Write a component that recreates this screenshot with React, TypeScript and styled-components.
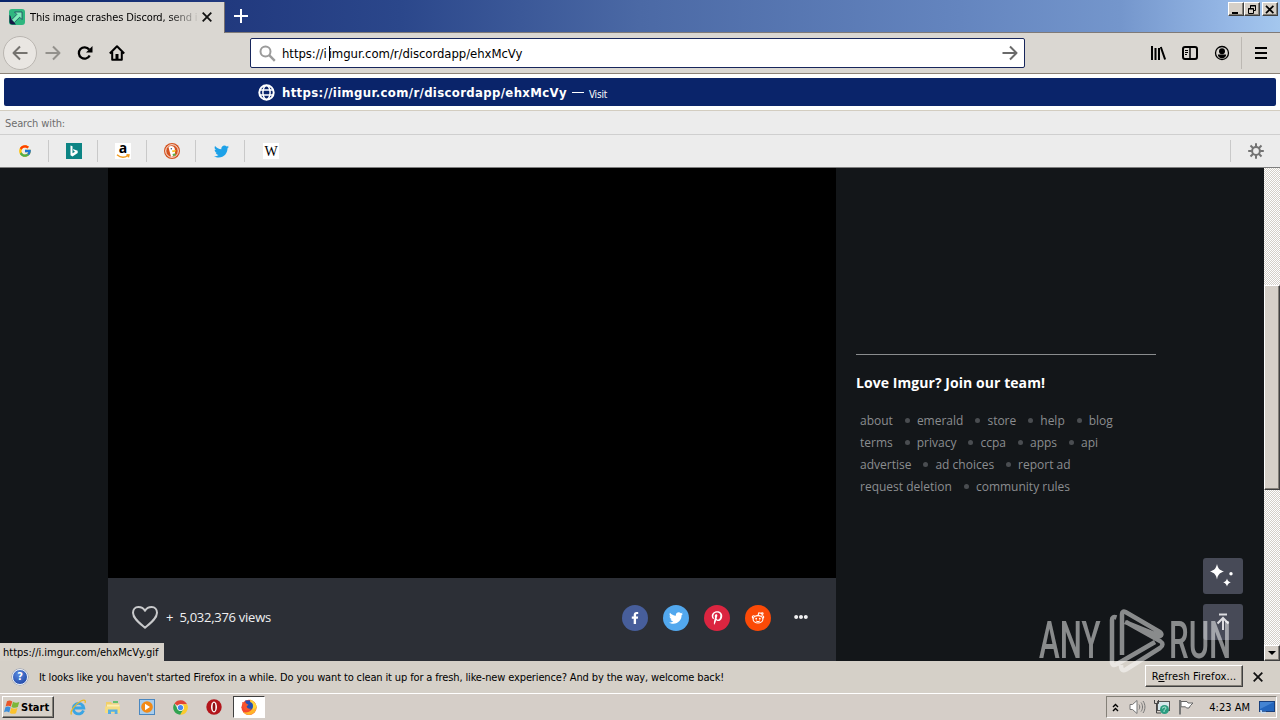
import type { ReactNode } from "react";
import styled, { createGlobalStyle, css } from "styled-components";
import { FcGoogle } from "react-icons/fc";
import {
    FaEllipsisH,
    FaFacebookF,
    FaPinterestP,
    FaTwitter,
} from "react-icons/fa";

const SHARES = [
    { name: "facebook", color: "#475e9b", icon: <FaFacebookF size={12} /> },
    { name: "twitter", color: "#52a8ee", icon: <FaTwitter size={14} /> },
    { name: "pinterest", color: "#db2540", icon: <FaPinterestP size={14} /> },
    { name: "reddit", color: "#fb4a07", icon: <RedditIcon /> },
];

const FOOTER_LINKS = [
    ["about", "emerald", "store", "help", "blog"],
    ["terms", "privacy", "ccpa", "apps", "api"],
    ["advertise", "ad choices", "report ad"],
    ["request deletion", "community rules"],
];

const ENGINES: { name: string; icon: ReactNode }[] = [
    { name: "google", icon: <FcGoogle size={14} /> },
    { name: "bing", icon: <BingIcon /> },
    { name: "amazon", icon: <AmazonIcon /> },
    { name: "duckduckgo", icon: <DuckIcon /> },
    { name: "twitter", icon: <FaTwitter size={15} color="#1da1e8" /> },
    { name: "wikipedia", icon: <WikipediaIcon /> },
];

function App() {
    return (
        <Screen>
            <GlobalStyle />
            <TabStrip>
                <Tab>
                    <ImgurIcon />
                    <TabTitle>This image crashes Discord, send it</TabTitle>
                    <CrossIcon size={10} />
                </Tab>
                <NewTab>
                    <svg width="14" height="14" viewBox="0 0 14 14">
                        <path d="M7 0v14M0 7h14" stroke="#fff" strokeWidth="2" />
                    </svg>
                </NewTab>
                <WindowButtons>
                    <WindowButton>
                        <svg width="10" height="9" viewBox="0 0 10 9">
                            <path d="M1 8h6" stroke="#000" strokeWidth="2" />
                        </svg>
                    </WindowButton>
                    <WindowButton>
                        <svg width="10" height="9" viewBox="0 0 10 9" fill="none" stroke="#000">
                            <path d="M3.5 3V.5h5v5H6.5M3 1h6M1 4h6M1.5 3.5h5v5h-5z" />
                        </svg>
                    </WindowButton>
                    <WindowButton $apart>
                        <svg width="10" height="9" viewBox="0 0 10 9">
                            <path d="M1 .8l7.4 7.4M8.4 .8L1 8.2" stroke="#000" strokeWidth="1.7" />
                        </svg>
                    </WindowButton>
                </WindowButtons>
            </TabStrip>

            <NavBar>
                <NavButtons>
                    <BackButton>
                        <ArrowIcon color="#75736f" flip />
                    </BackButton>
                    <ArrowIcon color="#93918c" />
                    <ReloadIcon />
                    <HomeIcon />
                </NavButtons>
                <UrlBar>
                    <svg width="17" height="17" viewBox="0 0 17 17" fill="none" stroke="#9b9b9b">
                        <circle cx="6.5" cy="6.5" r="5" strokeWidth="2" />
                        <path d="M10.2 10.2l5.6 5.6" strokeWidth="2.4" />
                    </svg>
                    <UrlText>
                        https://i<Caret />imgur.com/r/discordapp/ehxMcVy
                    </UrlText>
                    <ArrowIcon color="#6a6a6a" />
                </UrlBar>
                <NavTools>
                    <LibraryIcon />
                    <SidebarIcon />
                    <AccountIcon />
                    <MenuButton>
                        <svg width="12" height="12" viewBox="0 0 12 12">
                            <path d="M0 1h12M0 6h12M0 11h12" stroke="#000" strokeWidth="2" />
                        </svg>
                    </MenuButton>
                </NavTools>
            </NavBar>

            <ResultArea>
                <Result>
                    <GlobeIcon />
                    <ResultUrl>https://iimgur.com/r/discordapp/ehxMcVy</ResultUrl>
                    <ResultDash />
                    <ResultAction>Visit</ResultAction>
                </Result>
            </ResultArea>
            <SearchWith>Search with:</SearchWith>
            <EngineRow>
                {ENGINES.map(({ name, icon }) => (
                    <Engine key={name}>{icon}</Engine>
                ))}
                <EngineSettings>
                    <GearIcon />
                </EngineSettings>
            </EngineRow>

            <Page>
                <Post>
                    <Video />
                    <PostBar>
                        <svg width="28" height="25" viewBox="0 0 28 25" fill="none">
                            <path
                                d="M14 22.8C9 18.5 2 13.5 2 7.8C2 4.3 4.2 2 7.3 2C10.3 2 12.6 3.3 14 5.8C15.4 3.3 17.7 2 20.7 2C23.8 2 26 4.3 26 7.8C26 13.5 19 18.5 14 22.8Z"
                                stroke="#c9cacc"
                                strokeWidth="2"
                                strokeLinejoin="round"
                            />
                        </svg>
                        <Plus>+</Plus>
                        <Views>5,032,376 views</Views>
                        <Shares>
                            {SHARES.map(({ name, color, icon }) => (
                                <Share key={name} $color={color}>
                                    {icon}
                                </Share>
                            ))}
                            <More>
                                <FaEllipsisH size={14} />
                            </More>
                        </Shares>
                    </PostBar>
                </Post>
                <Side>
                    <SideTitle>Love Imgur? Join our team!</SideTitle>
                    {FOOTER_LINKS.map((row) => (
                        <LinkRow key={row[0]}>
                            {row.map((link) => (
                                <li key={link}>{link}</li>
                            ))}
                        </LinkRow>
                    ))}
                </Side>
                <FloatingButtons>
                    <FloatingButton>
                        <svg width="26" height="24" viewBox="0 0 26 24" fill="#fff">
                            <path d="M7 0C8 4.5 9.500 6 14 7.500C9.500 9 8 10.500 7 15.500C6 10.500 4.500 9 0 7.500C4.500 6 6 4.500 7 0Z" />
                            <path d="M17 14.500c.7 2.400 1.300 3.200 3.800 4-2.500.8-3.100 1.600-3.800 4-.7-2.400-1.300-3.200-3.800-4 2.500-.8 3.100-1.600 3.800-4z" />
                            <circle cx="21" cy="9.8" r="1.7" />
                        </svg>
                    </FloatingButton>
                    <FloatingButton>
                        <svg width="14" height="18" viewBox="0 0 14 18" fill="none" stroke="#dcdce0" strokeWidth="2">
                            <path d="M3 1.5h8M7 17V6M1.5 10.5L7 5l5.5 5.5" />
                        </svg>
                    </FloatingButton>
                </FloatingButtons>
                <ScrollTrack>
                    <ScrollThumb />
                    <ScrollArrow>
                        <svg width="8" height="4" viewBox="0 0 8 4">
                            <path d="M0 0h8L4 4z" />
                        </svg>
                    </ScrollArrow>
                </ScrollTrack>
                <StatusTip>https://i.imgur.com/ehxMcVy.gif</StatusTip>
            </Page>

            <NotificationBar>
                <HelpBadge>?</HelpBadge>
                <Message>
                    It looks like you haven't started Firefox in a while. Do you want to clean
                    it up for a fresh, like-new experience? And by the way, welcome back!
                </Message>
                <RefreshButton>
                    R<u>e</u>fresh Firefox...
                </RefreshButton>
                <CrossIcon size={10} />
            </NotificationBar>

            <TaskBar>
                <StartButton>
                    <WindowsFlag />
                    Start
                </StartButton>
                <QuickLaunch>
                    <ExplorerIcon />
                    <FolderIcon />
                    <MediaIcon />
                    <ChromeIcon />
                    <OperaIcon />
                </QuickLaunch>
                <ActiveTask>
                    <FirefoxIcon />
                </ActiveTask>
                <Tray>
                    <svg width="7" height="9" viewBox="0 0 7 9" fill="none" stroke="#000" strokeWidth="1.4">
                        <path d="M1 4l2.5-2.5L6 4M1 8l2.5-2.5L6 8" />
                    </svg>
                    <SpeakerIcon />
                    <NetworkIcon />
                    <FlagIcon />
                    <Clock>4:23 AM</Clock>
                    <MonitorIcon />
                </Tray>
            </TaskBar>

            <Watermark>
                <WatermarkWord>ANY</WatermarkWord>
                <WatermarkLogo width="58" height="64" viewBox="0 0 58 64" fill="none" stroke="#fff" strokeWidth="4.5">
                    <path
                        d="M8.500 8.500C5.500 7.500 4 8.500 4 11V53C4 56 6 57 9 55L47 33M14 46V5C14 2.500 15.500 2 17.500 3L51 22.500C54.500 24.500 54 28 50.500 26.500L17 13M13 56C13 61 15 62 18 60.500L52 39C55.500 36.500 55 34 52 32L18 13"
                        strokeLinejoin="round"
                    />
                </WatermarkLogo>
                <WatermarkWord>RUN</WatermarkWord>
            </Watermark>
        </Screen>
    );
}

export default App;

function CrossIcon({ size }: { size: number }) {
    return (
        <svg width={size} height={size} viewBox="0 0 10 10">
            <path d="M.7.7l8.600 8.600M9.300.7L.7 9.300" stroke="#111" strokeWidth="1.8" />
        </svg>
    );
}

function ArrowIcon({ color, flip }: { color: string; flip?: boolean }) {
    return (
        <svg width="16" height="16" viewBox="0 0 16 16" fill="none" stroke={color} strokeWidth="2">
            <path
                d={flip ? "M15.500 8H1.500M8 1.500L1.500 8L8 14.500" : "M.5 8h14M8 1.500L14.500 8L8 14.500"}
                strokeLinejoin="round"
            />
        </svg>
    );
}

function ReloadIcon() {
    return (
        <svg width="16" height="16" viewBox="0 0 16 16">
            <path d="M12.700 10.500a5.700 5.700 0 1 1-.6-6" fill="none" stroke="#000" strokeWidth="2.3" />
            <path d="M15.500 1v6.500H9z" />
        </svg>
    );
}

function HomeIcon() {
    return (
        <svg width="16" height="16" viewBox="0 0 16 16" fill="none" stroke="#000" strokeWidth="2">
            <path d="M.8 8.500L8 1.300l7.200 7.200M3.200 7v7.800h9.600V7" strokeLinejoin="round" />
            <path d="M8 15V9" strokeWidth="3" />
        </svg>
    );
}

function ImgurIcon() {
    return (
        <svg width="16" height="16" viewBox="0 0 16 16">
            <rect width="16" height="16" rx="3" fill="#2eb67f" />
            <path d="M.5 6c2 1 1 4 3 5.500L7 15.500H3.500a3 3 0 0 1-3-3z" fill="#171544" />
            <path d="M5.500 3h7.500v7.500l-2.300-2.300-5.400 5.300L2.600 10.800 7.900 5.400z" fill="#7deeb9" stroke="#1b2f58" strokeWidth=".7" />
        </svg>
    );
}

function LibraryIcon() {
    return (
        <svg width="16" height="14" viewBox="0 0 16 14" stroke="#000" strokeWidth="2">
            <path d="M2 0v14M5.500 2v12M9 2v12M10.800 1l4.300 12.500" />
        </svg>
    );
}

function SidebarIcon() {
    return (
        <svg width="16" height="14" viewBox="0 0 16 14" fill="none" stroke="#000">
            <rect x="1" y="1" width="14" height="12" rx="2" strokeWidth="2" />
            <path d="M8 1v12" strokeWidth="1.5" />
            <path d="M3 4.500h3M3 6.500h3M3 8.500h2" />
        </svg>
    );
}

function AccountIcon() {
    return (
        <svg width="16" height="16" viewBox="0 0 16 16">
            <circle cx="8" cy="8" r="6.5" fill="none" stroke="#000" strokeWidth="1.3" />
            <circle cx="8" cy="6.2" r="3" />
            <path d="M3.800 9.500h8.400c0 2-2 3.800-4.200 3.800s-4.200-1.800-4.200-3.800z" />
        </svg>
    );
}

function GlobeIcon() {
    return (
        <svg width="17" height="17" viewBox="0 0 17 17" fill="none" stroke="#fff">
            <circle cx="8.5" cy="8.5" r="7.2" strokeWidth="2" />
            <ellipse cx="8.5" cy="8.5" rx="3.6" ry="7" strokeWidth="1.5" />
            <path d="M2 6h13M2 11h13" strokeWidth="1.5" />
        </svg>
    );
}

function GearIcon() {
    return (
        <svg width="16" height="16" viewBox="0 0 16 16" fill="none" stroke="#737373" strokeWidth="2">
            <circle cx="8" cy="8" r="3.9" />
            <path d="M8 .2v3.600M8 12.200v3.600M.2 8h3.600M12.200 8h3.600M2.500 2.500L5 5M11 11l2.500 2.500M13.500 2.500L11 5M5 11l-2.500 2.500" />
        </svg>
    );
}

function BingIcon() {
    return (
        <svg width="16" height="16" viewBox="0 0 16 16">
            <path d="M0 0h16v16H0z" fill="#0c8484" />
            <path d="M4.500 2.500l2 .8v6.900l2.700-1.500-1.400-.7-.9-2 4.800 1.700v2.200l-5.200 3.500-2-1.200z" fill="#fff" />
        </svg>
    );
}

function AmazonIcon() {
    return (
        <AmazonTile>
            a
            <svg width="14" height="5" viewBox="0 0 14 5" fill="none" stroke="#f29b1d" strokeWidth="1.4">
                <path d="M1 .8c3.500 3 7.500 3 11 .8M10.500.7l2.500.2-.6 2.400" />
            </svg>
        </AmazonTile>
    );
}

function WikipediaIcon() {
    return <WikiTile>W</WikiTile>;
}

function DuckIcon() {
    return (
        <svg width="16" height="16" viewBox="0 0 16 16">
            <circle cx="8" cy="8" r="8" fill="#d4531f" />
            <circle cx="8" cy="8" r="6.3" fill="none" stroke="#fff" strokeWidth=".9" />
            <path d="M4.500 4c2-2 6-1.200 6.300 2l.3 6.500-4 1.300L5.500 8z" fill="#fff" />
            <path d="M8 7.500l4-.5-.5 1.600-3 .6z" fill="#f9c21b" />
            <path d="M8.500 11l3-.8v2.600l-2.500.2z" fill="#5cae48" />
            <circle cx="7.3" cy="5.8" r=".7" fill="#2a4a70" />
        </svg>
    );
}

function RedditIcon() {
    return (
        <svg width="14" height="12" viewBox="0 0 14 12" fill="none" stroke="#fff" strokeWidth="1.1">
            <ellipse cx="7" cy="7.3" rx="4.9" ry="3.7" />
            <path d="M7 3.500l.8-2.700 2.700.6M2.300 6.300A1.300 1.300 0 1 1 3.700 4.300M10.300 4.300a1.300 1.300 0 1 1 1.400 2M5 8.900c1.200.8 2.800.8 4 0" />
            <circle cx="11.3" cy="1.6" r=".8" />
            <g fill="#fff" stroke="none">
                <circle cx="5.2" cy="6.7" r=".9" />
                <circle cx="8.8" cy="6.7" r=".9" />
            </g>
        </svg>
    );
}

function WindowsFlag() {
    return (
        <svg width="16" height="16" viewBox="0 0 16 16">
            <path d="M3 2.200C5 1 6.500 1.200 8.300 2.400L6.800 7.600C5 6.500 3.500 6.400 1.600 7.400z" fill="#e8562a" />
            <path d="M9 2.700c2 1.100 3.800 1.300 6.300.2l-1.500 5.200c-2.200 1-4.200.8-6.300-.2z" fill="#7cb73a" />
            <path d="M1.400 8.200C3.200 7.200 4.800 7.300 6.600 8.400L5.200 13.500C3.400 12.300 1.900 12.300 0 13.300z" fill="#3c8edb" />
            <path d="M7.300 8.800c2 1.100 4 1.200 6.200.2L12 14.200c-2.200 1-4.200.7-6.200-.3z" fill="#fbc22d" />
        </svg>
    );
}

function ExplorerIcon() {
    return (
        <svg width="17" height="17" viewBox="0 0 17 17" fill="none">
            <path d="M13.500 11.500A5.300 5.300 0 1 1 13.800 9H4" stroke="#3aa5e4" strokeWidth="2.8" />
            <path d="M1.500 15.500C-.5 13 5 5 11 2c3.500-1.700 5-.5 4 2" stroke="#e9b929" strokeWidth="1.3" />
        </svg>
    );
}

function FolderIcon() {
    return (
        <svg width="16" height="16" viewBox="0 0 16 16">
            <path d="M1 3h5l1 1.500h7V14H1z" fill="#f1cf69" />
            <path d="M2 5.500h12.500V9H2z" fill="#fbeeb4" />
            <path d="M0 7.500h15V14H0z" fill="#f5dc83" />
            <path d="M3 15v-4.500h9.500V15h-2.800v-2.300H6V15z" fill="#56aee2" />
            <path d="M8 2h5v2H8z" fill="#66c06c" />
        </svg>
    );
}

function MediaIcon() {
    return (
        <svg width="16" height="16" viewBox="0 0 16 16">
            <rect x=".5" y=".5" width="15" height="15" fill="#a9cdec" stroke="#4a87c0" />
            <circle cx="8" cy="8" r="5.8" fill="#f28a16" />
            <path d="M6 4.800v6.400L11 8z" fill="#fff" />
        </svg>
    );
}

function ChromeIcon() {
    return (
        <svg width="15" height="15" viewBox="0 0 16 16">
            <path d="M8 8L1.500 3.800A7.700 7.700 0 0 1 15 4.600H8z" fill="#e24435" />
            <path d="M15 4.600A7.700 7.700 0 0 1 7.600 15.700L11.200 9 8 4.600z" fill="#fbcb2e" />
            <path d="M1.500 3.800A7.700 7.700 0 0 0 7.600 15.700L11 9.800 4.900 9.600z" fill="#31a350" />
            <circle cx="8" cy="8" r="3.6" fill="#fff" />
            <circle cx="8" cy="8" r="2.8" fill="#4688f0" />
        </svg>
    );
}

function OperaIcon() {
    return (
        <svg width="16" height="16" viewBox="0 0 16 16">
            <circle cx="8" cy="8" r="7.7" fill="#b3151b" />
            <ellipse cx="8" cy="8" rx="3" ry="5.4" fill="#fff" />
            <ellipse cx="8" cy="8" rx="1.4" ry="4.3" fill="#8f0d12" />
        </svg>
    );
}

function FirefoxIcon() {
    return (
        <svg width="16" height="16" viewBox="0 0 16 16">
            <circle cx="8" cy="8.3" r="7.6" fill="#f5472f" />
            <path d="M14.500 4.500A7.600 7.600 0 0 1 8 15.900a7.600 7.600 0 0 1-6-2.900c5 1.500 9-1 9.300-5z" fill="#ffb52a" />
            <path d="M9 .5c3.500 1 6.500 4.200 6.500 8l-3.500 2L9.800 5z" fill="#ffd43a" />
            <circle cx="8" cy="7" r="4" fill="#2550b4" />
            <path d="M4 1.500h5v3H5z" fill="#2550b4" />
            <path d="M1 3c1 .4 2 1 3.500 1l3 1.700-1.800 1.500c0 2 2 3 4.600 2.300-1 2-5.500 3-7.500 0z" fill="#f9542c" />
        </svg>
    );
}

function SpeakerIcon() {
    return (
        <svg width="17" height="16" viewBox="0 0 17 16" fill="none" stroke="#777">
            <path d="M1 5.500h2.500L8 1.500v13L3.500 10.500H1z" fill="#fff" />
            <path d="M10 5.500c1 1.500 1 3.500 0 5M12 3.500c2 2.500 2 6.500 0 9M14 2c2.600 3.500 2.600 8.500 0 12" />
        </svg>
    );
}

function NetworkIcon() {
    return (
        <svg width="16" height="16" viewBox="0 0 16 16">
            <rect x="3.5" y="2.5" width="12" height="9" fill="#d6e8ec" stroke="#555" />
            <path d="M.5 1v3.500h4V1M2.500 4.500V14H7" fill="none" stroke="#444" />
            <circle cx="10.5" cy="10.5" r="4.5" fill="#2b9c80" />
            <path d="M8 9.500c1.500-2 4-2 4-.5S9.500 11 10 13" stroke="#b8eadb" fill="none" />
        </svg>
    );
}

function FlagIcon() {
    return (
        <svg width="16" height="16" viewBox="0 0 16 16">
            <path d="M3 2.500h6l1 1.500h5L12.500 6.500 11 9H8.500l-1-1.200H3z" fill="#fff" stroke="#666" />
            <path d="M2 1v14.500" stroke="#777" strokeWidth="2" />
        </svg>
    );
}

function MonitorIcon() {
    return (
        <svg width="16" height="13" viewBox="0 0 16 13">
            <rect x=".5" y=".5" width="15" height="10" fill="#2466bd" stroke="#183f7c" />
            <path d="M1 1h14L1 8z" fill="#4484d2" />
            <path d="M2 11.500h5M1 10h2" stroke="#c7ddf4" strokeWidth="1.5" />
        </svg>
    );
}

const GlobalStyle = createGlobalStyle`
    * {
        box-sizing: border-box;
    }

    body {
        margin: 0;
        overflow: hidden;
        font-family: "DejaVu Sans Condensed", "DejaVu Sans", sans-serif;
        font-size: 11px;
        color: #000;
    }

    svg {
        display: block;
        flex-shrink: 0;
    }
`;

const raised = css`
    background-color: #d6d0c8;
    border: 1px solid;
    border-color: #fff #404040 #404040 #fff;
    box-shadow: inset -1px -1px 0 #848078;
`;

const Screen = styled.div`
    position: relative;
    display: flex;
    flex-direction: column;
    width: 1280px;
    height: 720px;
    overflow: hidden;
    white-space: nowrap;
`;

const TabStrip = styled.div`
    display: flex;
    height: 33px;
    border-bottom: 1px solid #7f7a78;
    background: linear-gradient(
        90deg,
        #08246b 0,
        #21397e 224px,
        #2b478b 400px,
        #4b69a5 640px,
        #6485bf 960px,
        #7496cc 1120px,
        #96b8e6 1230px,
        #a4c7ee 1280px
    );
`;

const Tab = styled.div`
    display: flex;
    align-items: center;
    width: 225px;
    height: 31px;
    margin-top: 2px;
    padding: 0 12px 1px 9px;
    border-right: 1px solid #77706f;
    background-color: #dad7d2;
    box-shadow: 0 1px 0 #dad7d2;
`;

const TabTitle = styled.div`
    width: 167px;
    margin: 0 5px;
    overflow: hidden;
    letter-spacing: -0.13px;
    mask-image: linear-gradient(90deg, #000 138px, transparent 170px);
`;

const NewTab = styled.div`
    padding: 9px;
`;

const WindowButtons = styled.div`
    display: flex;
    margin: 2px 2px 0 auto;
`;

const WindowButton = styled.div<{ $apart?: boolean }>`
    ${raised}
    display: flex;
    justify-content: center;
    align-items: center;
    width: 16px;
    height: 14px;
    margin-left: ${({ $apart }) => ($apart ? "2px" : "0")};
`;

const NavBar = styled.div`
    display: flex;
    align-items: center;
    height: 41px;
    border-bottom: 1px solid #8b8278;
    background-color: #dad7d2;
`;

const NavButtons = styled.div`
    display: flex;
    align-items: center;
    gap: 16px;
    width: 250px;
    padding-left: 3px;
`;

const BackButton = styled.div`
    display: flex;
    justify-content: center;
    align-items: center;
    width: 34px;
    height: 34px;
    margin-right: -8px;
    border: 1px solid #bab6b1;
    border-radius: 50%;
    background-color: #e9e6e2;
`;

const UrlBar = styled.div`
    display: flex;
    align-items: center;
    width: 775px;
    height: 30px;
    padding: 0 6px 0 8px;
    border: 1px solid #17265c;
    border-radius: 2px;
    background-color: #fff;
`;

const UrlText = styled.div`
    flex: 1;
    padding-left: 6px;
    font-size: 13px;
    letter-spacing: -0.06px;
`;

const Caret = styled.span`
    display: inline-block;
    width: 1px;
    height: 15px;
    margin: 0 -1px 0 2px;
    background-color: #000;
    vertical-align: -3px;
`;

const NavTools = styled.div`
    display: flex;
    align-items: center;
    gap: 16px;
    margin-left: auto;
`;

const MenuButton = styled.div`
    display: flex;
    align-items: center;
    height: 32px;
    margin-left: -5px;
    padding: 0 13px;
    border-left: 1px solid #bcb8b3;
`;

const ResultArea = styled.div`
    height: 37px;
    padding: 4px;
    border-bottom: 1px solid #d3cdc0;
    background-color: #fff;
`;

const Result = styled.div`
    display: flex;
    align-items: center;
    height: 28px;
    padding-left: 254px;
    border-radius: 2px;
    background-color: #0a246a;
    color: #fff;
`;

const ResultUrl = styled.div`
    margin-left: 7px;
    font-size: 13px;
    font-weight: bold;
    letter-spacing: 0.35px;
`;

const ResultDash = styled.div`
    width: 12px;
    height: 1px;
    margin: 0 5px;
    background-color: #fff;
`;

const ResultAction = styled.div`
    padding-top: 4px;
    font-size: 10px;
    letter-spacing: -0.2px;
`;

const SearchWith = styled.div`
    height: 24px;
    padding-left: 5px;
    border-bottom: 1px solid #cfcfcf;
    background-color: #ececec;
    color: #6e6e6e;
    line-height: 25px;
    letter-spacing: -0.12px;
`;

const EngineRow = styled.div`
    display: flex;
    align-items: center;
    height: 33px;
    border-bottom: 1px solid #7e7e7e;
    background-color: #ececec;
`;

const Engine = styled.div`
    display: flex;
    justify-content: center;
    align-items: center;
    width: 49px;
    height: 22px;
    padding-left: 2px;
    border-right: 1px solid #c9c9c9;

    &:nth-child(6) {
        width: 50px;
        border-right: none;
    }
`;

const EngineSettings = styled.div`
    display: flex;
    justify-content: center;
    align-items: center;
    width: 50px;
    height: 22px;
    margin-left: auto;
    border-left: 1px solid #c9c9c9;
`;

const AmazonTile = styled.div`
    display: flex;
    flex-direction: column;
    align-items: center;
    width: 16px;
    height: 16px;
    background-color: #fff;
    font: bold 14px/10px "Open Sans", sans-serif;

    svg {
        margin-top: 1px;
    }
`;

const WikiTile = styled.div`
    width: 16px;
    height: 16px;
    background-color: #fff;
    font: 14px/17px "Liberation Serif", serif;
    text-align: center;
`;

const Page = styled.div`
    position: relative;
    display: flex;
    height: 493px;
    padding-left: 108px;
    background-color: #131619;
    font-family: "Open Sans", sans-serif;
`;

const Post = styled.div`
    width: 728px;
`;

const Video = styled.div`
    height: 410px;
    background-color: #000;
`;

const PostBar = styled.div`
    display: flex;
    align-items: center;
    height: 83px;
    padding: 0 28px 5px 23px;
    background-color: #2c2f36;
    color: #f0f0f1;
`;

const Plus = styled.div`
    margin-left: 7px;
    font-size: 13px;
`;

const Views = styled.div`
    margin-left: 6px;
    font-size: 13px;
    letter-spacing: -0.27px;
`;

const Shares = styled.div`
    display: flex;
    align-items: center;
    gap: 15px;
    margin-left: auto;
`;

const Share = styled.div<{ $color: string }>`
    display: flex;
    justify-content: center;
    align-items: center;
    width: 26px;
    height: 26px;
    margin-top: 2px;
    border-radius: 50%;
    background-color: ${({ $color }) => $color};
    color: #fff;
`;

const More = styled.div`
    margin-left: 8px;
`;

const Side = styled.div`
    width: 300px;
    margin: 186px 0 0 20px;
    border-top: 1px solid #8a8c8e;
`;

const SideTitle = styled.h4`
    margin: 18px 0 17px;
    color: #fff;
    font-size: 14px;
    line-height: 20px;
    letter-spacing: 0.06px;
`;

const LinkRow = styled.ul`
    display: flex;
    gap: 24px;
    margin: 0;
    padding-left: 4px;
    color: #8b8d90;
    font-size: 12px;
    line-height: 22px;
    list-style: none;

    li + li {
        position: relative;
    }

    li + li::before {
        content: "";
        position: absolute;
        top: 8px;
        left: -12px;
        width: 5px;
        height: 5px;
        border-radius: 50%;
        background-color: #4a4d51;
    }
`;

const FloatingButtons = styled.div`
    position: absolute;
    right: 37px;
    bottom: 21px;
    display: flex;
    flex-direction: column;
    gap: 10px;
`;

const FloatingButton = styled.div`
    display: flex;
    justify-content: center;
    align-items: center;
    width: 40px;
    height: 36px;
    border-radius: 3px;
    background-color: #474a57;
`;

const ScrollTrack = styled.div`
    display: flex;
    flex-direction: column;
    width: 16px;
    margin-left: auto;
    padding-top: 117px;
    background: repeating-conic-gradient(#d4d0c8 0 25%, #fff 0 50%) 0 0 / 2px 2px;
`;

const ScrollThumb = styled.div`
    ${raised}
    height: 205px;
`;

const ScrollArrow = styled.div`
    ${raised}
    display: flex;
    justify-content: center;
    align-items: center;
    height: 16px;
    margin-top: auto;
`;

const StatusTip = styled.div`
    position: absolute;
    left: 0;
    bottom: 0;
    width: 164px;
    height: 18px;
    padding-left: 3px;
    background-color: #d6d1c9;
    font-family: "DejaVu Sans Condensed", "DejaVu Sans", sans-serif;
    line-height: 20px;
`;

const NotificationBar = styled.div`
    display: flex;
    align-items: center;
    height: 32px;
    padding: 0 17px 0 12px;
    background-color: #d5d0c8;
`;

const HelpBadge = styled.div`
    width: 16px;
    height: 16px;
    border: 1px solid #e4ecf7;
    border-radius: 50%;
    background: radial-gradient(circle at 40% 30%, #5a8be0, #153a9c);
    box-shadow: 0 0 0 0.5px #8793ad;
    color: #fff;
    font-size: 11px;
    font-weight: bold;
    line-height: 14px;
    text-align: center;
`;

const Message = styled.div`
    margin-left: 11px;
    letter-spacing: -0.138px;
`;

const RefreshButton = styled.div`
    ${raised}
    width: 98px;
    height: 22px;
    margin: 0 10px 2px auto;
    line-height: 21px;
    text-align: center;
    letter-spacing: 0.1px;
`;

const TaskBar = styled.div`
    display: flex;
    align-items: center;
    height: 27px;
    padding: 0 3px 0 2px;
    border-top: 1px solid #fff;
    background-color: #d5cec8;
`;

const StartButton = styled.div`
    ${raised}
    display: flex;
    align-items: center;
    gap: 1px;
    width: 52px;
    height: 22px;
    padding-left: 1px;
    font-weight: bold;
`;

const QuickLaunch = styled.div`
    display: flex;
    align-items: center;
    gap: 18px;
    width: 179px;
    padding-left: 16px;
`;

const ActiveTask = styled.div`
    display: flex;
    justify-content: center;
    align-items: center;
    width: 32px;
    height: 22px;
    border: 1px solid;
    border-color: #404040 #fff #fff #404040;
    background-color: #fff;
`;

const Tray = styled.div`
    display: flex;
    align-items: center;
    width: 171px;
    height: 22px;
    margin-left: auto;
    padding: 0 1px 0 5px;
    border: 1px solid;
    border-color: #848078 #fff #fff #848078;
    gap: 8px;

    svg:first-child {
        margin-right: 2px;
    }
`;

const Clock = styled.div`
    margin: 0 1px 0 auto;
`;

const Watermark = styled.div`
    position: absolute;
    left: 1039px;
    top: 609px;
    display: flex;
    align-items: center;
    height: 64px;
    opacity: 0.5;
    color: #fff;
`;

const WatermarkWord = styled.div`
    width: 62px;
    font: 500 52px/64px Roboto, sans-serif;
    transform: scaleX(0.6);
    transform-origin: 0 50%;
`;

const WatermarkLogo = styled.svg`
    margin: 0 3px 0 7px;
`;
